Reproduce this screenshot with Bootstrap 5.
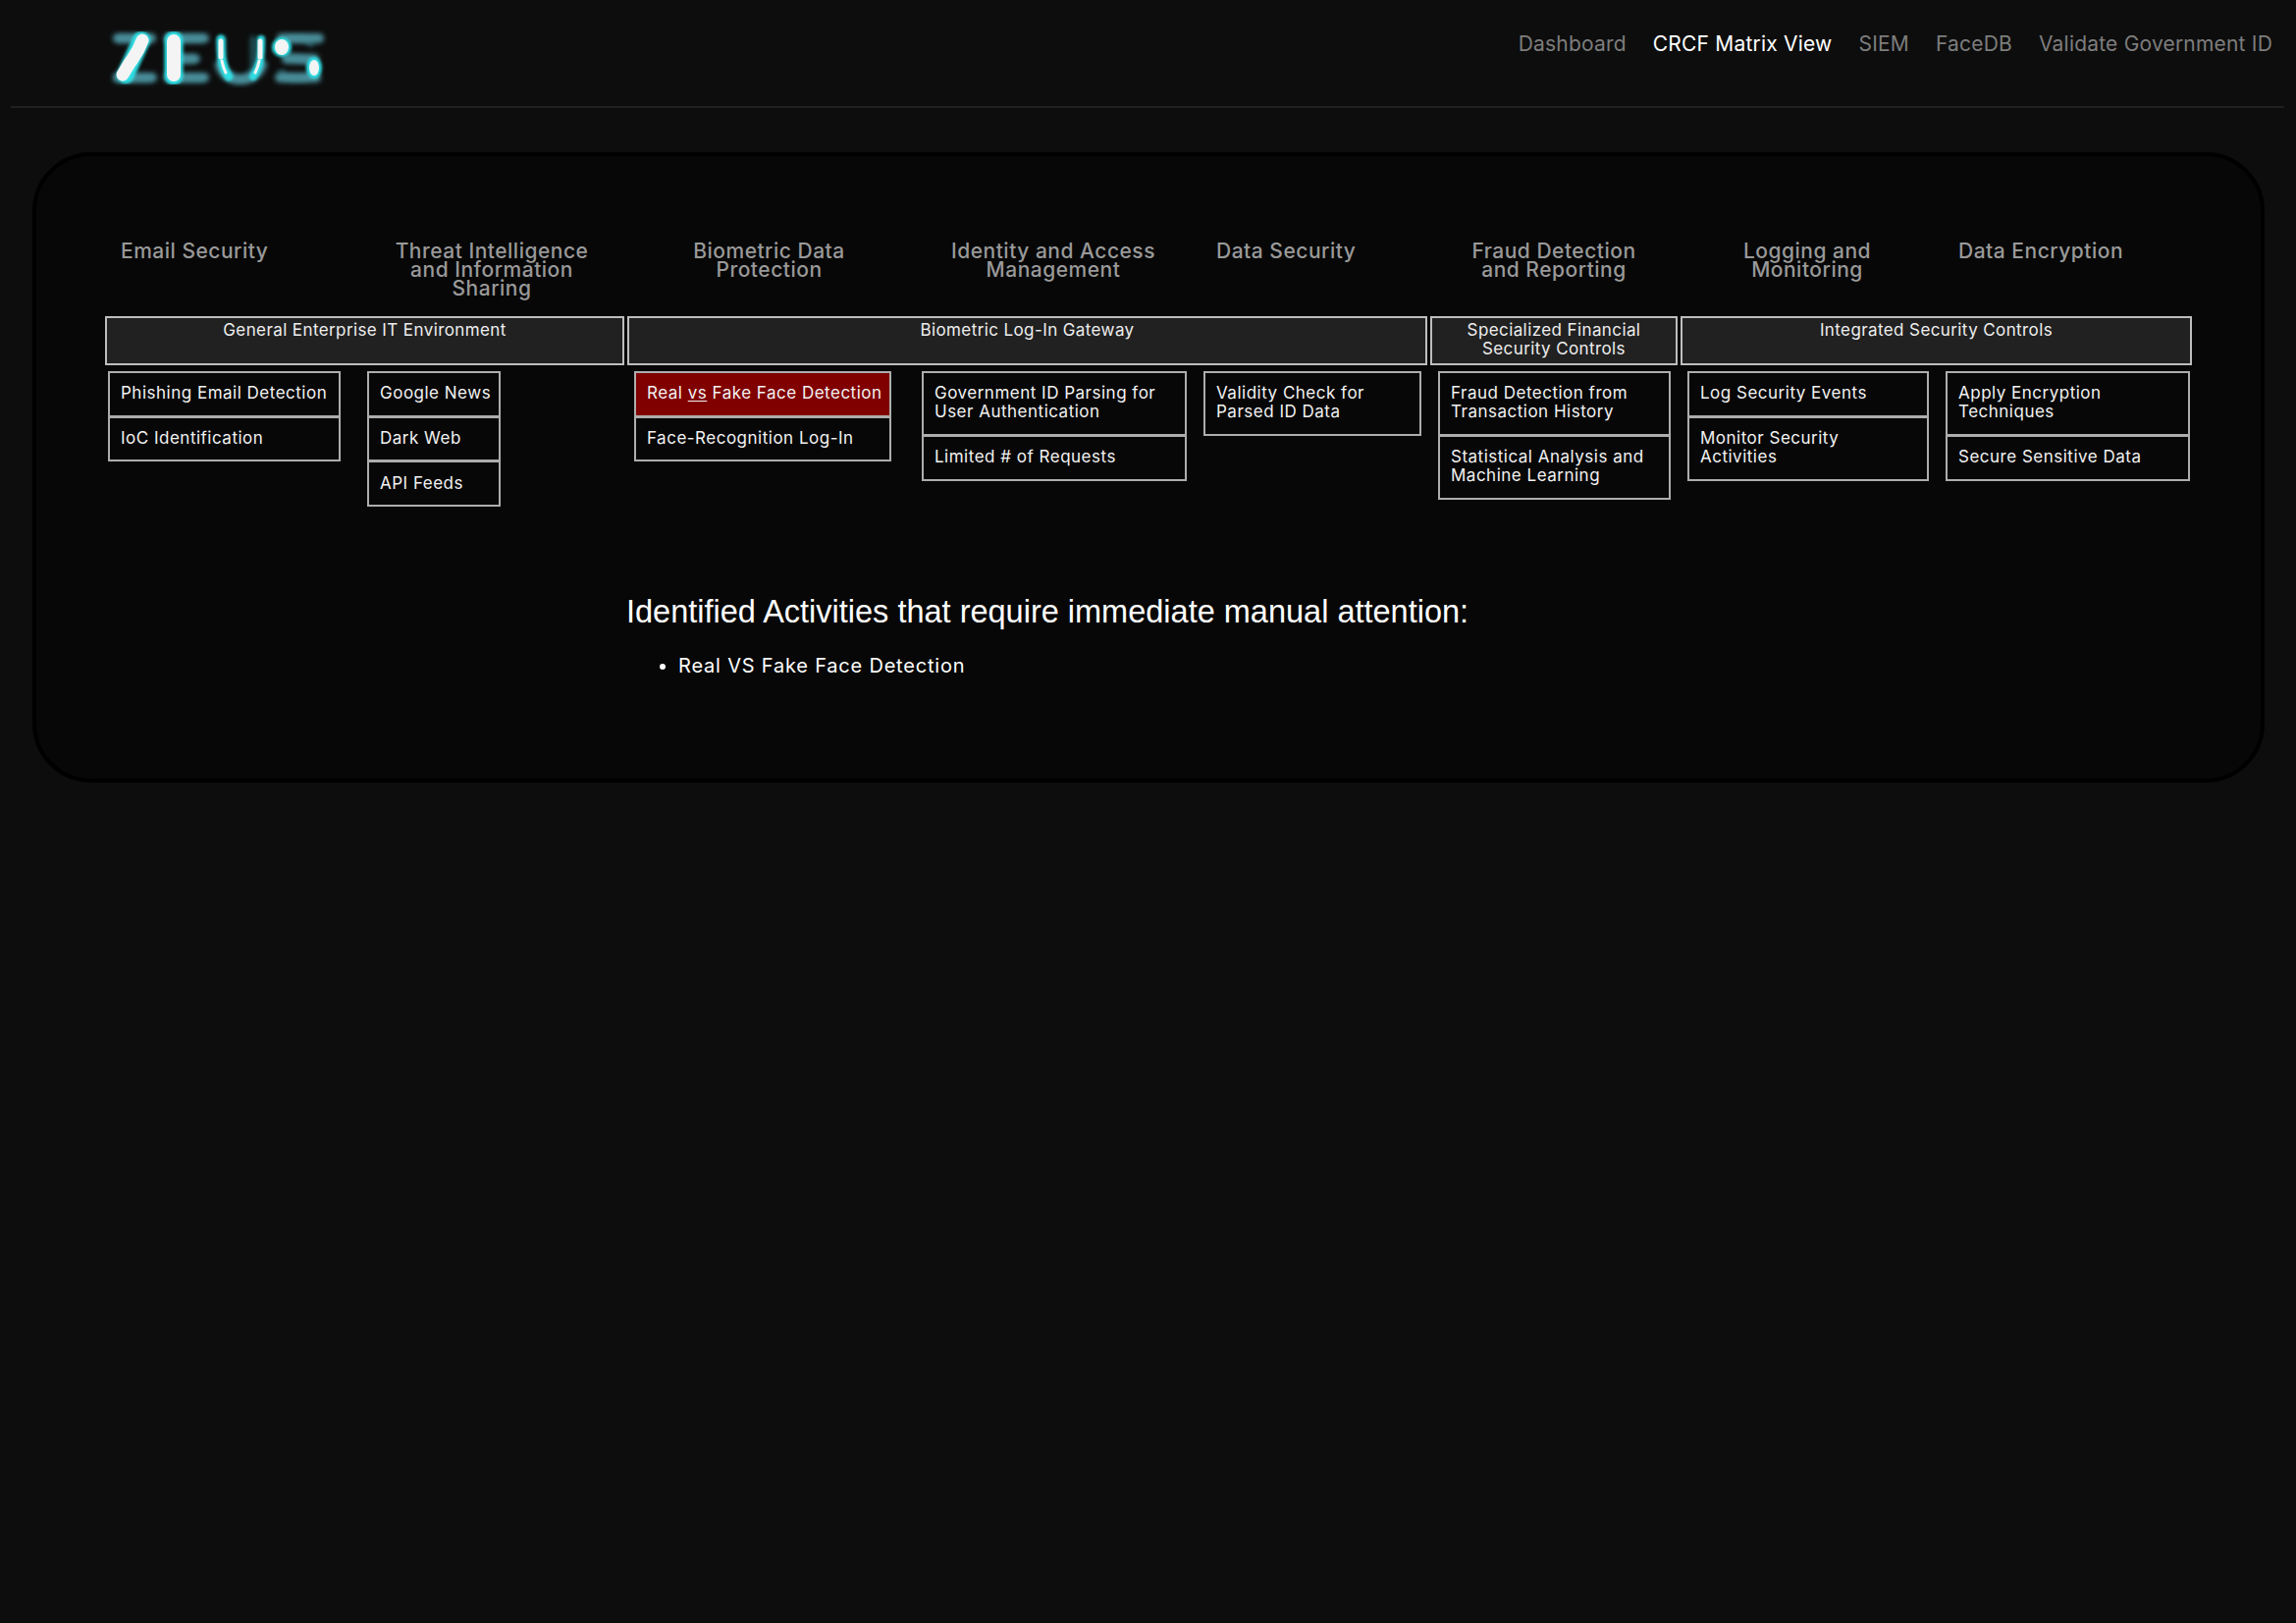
<!DOCTYPE html>
<html lang="en">

<head>
  <meta charset="UTF-8">
  <title>ZEUS - CRCF Matrix View</title>
  <link href="https://cdn.jsdelivr.net/npm/bootstrap@5.3.3/dist/css/bootstrap.min.css" rel="stylesheet">
  <style>
    body { background: #0d0d0d; color: #fff; font-family: Inter, "Liberation Sans", sans-serif; }
    .top-bar { margin: 0 12px 0 11px; height: 110px; padding: 0; border-bottom: 2px solid #1f1f1f; align-items: flex-start; }
    .zeus-logo { margin-left: 93px; margin-top: 25px; display: block; }
    .top-links { padding-top: 26px; gap: 27px; margin-right: 12px; }
    .top-links .nav-link { padding: 0; font-size: 21px; letter-spacing: .2px; line-height: 38px; color: #7d7d7d; }
    .top-links .nav-link.active { color: #fff; }
    .matrix-panel { margin: 45px 32px 0 33px; height: 642px; background: #070707; border: 4px solid #000; border-radius: 60px; padding: 88px 0 0 70px; }
    .matrix-grid { display: grid; grid-template-columns: 253px 273px 286px 290px 233px 252px 258px 260px; column-gap: 3px; width: 2126px; line-height: 19.2px; }
    .col-head { height: 75px; margin-top: -1px; margin-bottom: 1px; font-size: 21px; letter-spacing: .5px; font-weight: 500; color: #999; text-align: center; }
    .head-left { text-align: left; }
    .head-shift { padding-left: 3px; }
    .head-email { padding-left: 16px; }
    .head-data { padding-left: 18px; }
    .head-crypt { padding-left: 22px; }
    .section-box { height: 50px; margin-bottom: 6px; padding: 3px 6px 0; background: #212121; border: 2px solid #bdbdbd; font-size: 17px; letter-spacing: .4px; text-align: center; color: #eee; }
    .span-2 { grid-column: span 2; }
    .span-1 { grid-column: span 1; }
    .span-3 { grid-column: span 3; }
    .item-stack { font-size: 17px; letter-spacing: .5px; color: #f2f2f2; }
    .item-box { padding: 11.25px 11px 12.25px; border: 2px solid #adadad; background: #070707; white-space: nowrap; }
    .item-box + .item-box { margin-top: -1px; }
    .item-flag { background: #800000; }
    .item-flag u { text-underline-offset: 2px; }
    .stack-1 { margin-left: 3px; width: 237px; }
    .stack-2 { margin-left: 11px; width: 136px; }
    .stack-3 { margin-left: 7px; width: 262px; }
    .stack-4 { margin-left: 11px; width: 270px; }
    .stack-5 { margin-left: 5px; width: 222px; }
    .stack-6 { margin-left: 8px; width: 237px; }
    .stack-7 { margin-left: 7px; width: 246px; }
    .stack-8 { margin-left: 9px; width: 249px; }
    .attention-block { margin: 88px 0 0 531px; }
    .attention-block h2 { font-family: "Liberation Sans", Arial, sans-serif; font-size: 32.5px; line-height: 38px; margin-bottom: 24px; font-weight: 400; }
    .attention-block ul { padding-left: 53px; font-size: 20px; letter-spacing: .8px; line-height: 24px; }
  </style>
</head>

<body>
  <nav class="top-bar d-flex justify-content-between">
    <svg class="zeus-logo" width="230" height="70" viewBox="104 25 230 70" role="img" aria-label="ZEUS">
      <defs>
        <filter id="softA" x="-10%" y="-20%" width="120%" height="140%"><feGaussianBlur stdDeviation="2.6"/></filter>
        <filter id="softB" x="-10%" y="-20%" width="120%" height="140%"><feGaussianBlur stdDeviation="1.4"/></filter>
      </defs>
      <text x="115 165 218 280" y="83" font-family="Liberation Sans" font-size="67" fill="#24525c" filter="url(#softA)">ZEUS</text>
      <g fill="none" stroke="#4a8d99" stroke-width="10" stroke-linecap="round" filter="url(#softA)">
        <path d="M120 39 H154 M120 79 H155"/>
        <path d="M172 39 H208 M172 79 H208 M186 60 H198"/>
        <path d="M224 66 C230 86 260 86 267 66"/>
        <path d="M287 39 H325 M292 60 H320 M285 79 H322"/>
      </g>
      <g fill="none" stroke="#2fe0e6" stroke-linecap="round" stroke-linejoin="round" filter="url(#softB)">
        <path d="M144 41 L128 76" stroke-width="18"/>
        <path d="M177 41 V77" stroke-width="19"/>
        <path d="M225 40 C225 60 226 68 233 78" stroke-width="9"/>
        <path d="M266 40 C266 60 265 68 258 78" stroke-width="8"/>
        <ellipse cx="287" cy="48" rx="8" ry="8" fill="#2fe0e6" stroke-width="4"/>
        <ellipse cx="320" cy="69" rx="6" ry="9" fill="#2fe0e6" stroke-width="4"/>
      </g>
      <g fill="none" stroke="#f4f4f4" stroke-linecap="round" stroke-linejoin="round">
        <path d="M145 41 C140 55 136 58 131 66 L125 76" stroke-width="13"/>
        <path d="M177 42 V76" stroke-width="14"/>
        <path d="M225 42 V58" stroke-width="5"/>
        <path d="M265 42 V58" stroke-width="5"/>
        <path d="M226 62 C227 68 228 70 230 74" stroke-width="3"/>
        <path d="M264 62 C263 68 262 70 260 74" stroke-width="3"/>
        <ellipse cx="287" cy="48" rx="7" ry="8" fill="#f4f4f4" stroke="none"/>
        <ellipse cx="320" cy="69" rx="5" ry="8" fill="#f4f4f4" stroke="none"/>
      </g>
    </svg>
    <div class="nav top-links">
      <a class="nav-link" href="#">Dashboard</a>
      <a class="nav-link active" href="#">CRCF Matrix View</a>
      <a class="nav-link" href="#">SIEM</a>
      <a class="nav-link" href="#">FaceDB</a>
      <a class="nav-link" href="#">Validate Government ID</a>
    </div>
  </nav>

  <main class="matrix-panel">
    <div class="matrix-grid">
      <div class="col-head head-left head-email">Email Security</div>
      <div class="col-head head-shift">Threat Intelligence<br>and Information<br>Sharing</div>
      <div class="col-head head-shift">Biometric Data<br>Protection</div>
      <div class="col-head">Identity and Access<br>Management</div>
      <div class="col-head head-left head-data">Data Security</div>
      <div class="col-head">Fraud Detection<br>and Reporting</div>
      <div class="col-head">Logging and<br>Monitoring</div>
      <div class="col-head head-left head-crypt">Data Encryption</div>

      <div class="section-box span-2">General Enterprise IT Environment</div>
      <div class="section-box span-3">Biometric Log-In Gateway</div>
      <div class="section-box span-1">Specialized Financial<br>Security Controls</div>
      <div class="section-box span-2">Integrated Security Controls</div>

      <div class="item-stack stack-1">
        <div class="item-box">Phishing Email Detection</div>
        <div class="item-box">IoC Identification</div>
      </div>
      <div class="item-stack stack-2">
        <div class="item-box">Google News</div>
        <div class="item-box">Dark Web</div>
        <div class="item-box">API Feeds</div>
      </div>
      <div class="item-stack stack-3">
        <div class="item-box item-flag">Real <u>vs</u> Fake Face Detection</div>
        <div class="item-box">Face-Recognition Log-In</div>
      </div>
      <div class="item-stack stack-4">
        <div class="item-box">Government ID Parsing for<br>User Authentication</div>
        <div class="item-box">Limited # of Requests</div>
      </div>
      <div class="item-stack stack-5">
        <div class="item-box">Validity Check for<br>Parsed ID Data</div>
      </div>
      <div class="item-stack stack-6">
        <div class="item-box">Fraud Detection from<br>Transaction History</div>
        <div class="item-box">Statistical Analysis and<br>Machine Learning</div>
      </div>
      <div class="item-stack stack-7">
        <div class="item-box">Log Security Events</div>
        <div class="item-box">Monitor Security<br>Activities</div>
      </div>
      <div class="item-stack stack-8">
        <div class="item-box">Apply Encryption<br>Techniques</div>
        <div class="item-box">Secure Sensitive Data</div>
      </div>
    </div>

    <div class="attention-block">
      <h2>Identified Activities that require immediate manual attention:</h2>
      <ul>
        <li>Real VS Fake Face Detection</li>
      </ul>
    </div>
  </main>

  <script src="https://cdn.jsdelivr.net/npm/bootstrap@5.3.3/dist/js/bootstrap.bundle.min.js"></script>
</body>
</html>
